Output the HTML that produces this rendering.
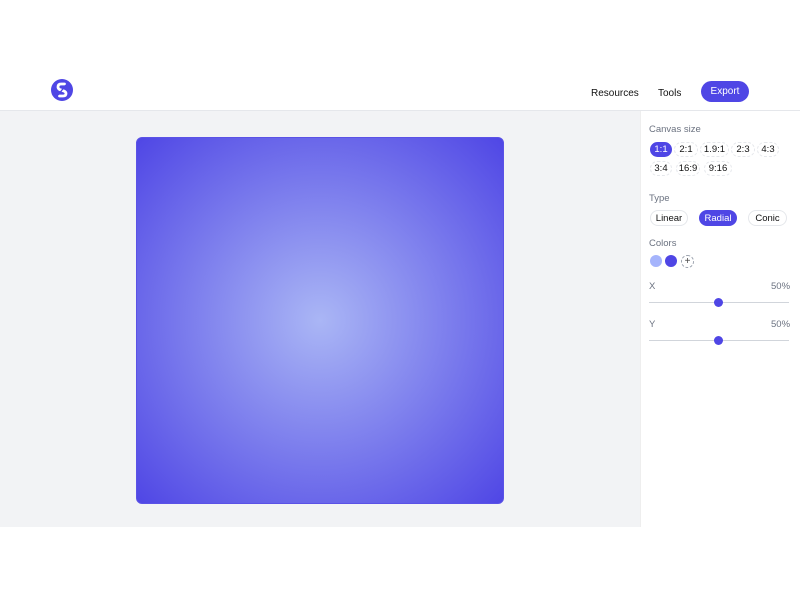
<!DOCTYPE html>
<html><head><style>
*{box-sizing:border-box;margin:0;padding:0}
body{width:800px;height:600px;background:#fff;font-family:"Liberation Sans",sans-serif;position:relative;overflow:hidden}
.hdr{position:absolute;top:0;left:0;width:800px;height:111px;border-bottom:1px solid #e5e7eb;background:#fff}
.logo{position:absolute;left:51px;top:79px;width:22px;height:22px;border-radius:50%;background:#4f46e5}
.nav{position:absolute;top:88px;font-size:10px;color:#111}
.exp{position:absolute;left:701px;top:81px;width:48px;height:21px;border-radius:11px;background:#4f46e5;color:#fff;font-size:10px;text-align:center;padding-top:6px;line-height:10px}
.main{position:absolute;top:111px;left:0;width:641px;height:416px;background:#f2f3f5}
.cv{position:absolute;left:136px;top:26px;width:368px;height:367px;border-radius:6px;border:1px solid #5b52e6;background:radial-gradient(circle farthest-corner at 50% 50%,#aab6f5 0%,#4f46e5 100%)}
.side{position:absolute;left:640px;top:111px;width:160px;height:416px;border-left:1px solid #eee;background:#fff}
.lbl{position:absolute;left:8px;font-size:9.5px;color:#6b7280}
.chip{position:absolute;height:15px;border-radius:8px;border:1px dashed #e5e7eb;font-size:9.5px;color:#111;text-align:center;line-height:14px}
.chip.on{background:#4f46e5;color:#fff;border:none;line-height:16px}
.pill{position:absolute;height:16px;border-radius:8px;border:1px solid #e5e7eb;font-size:9.5px;text-align:center;line-height:15px;color:#111}
.pill.on{background:#4f46e5;color:#fff;border:none;line-height:17px}
.track{position:absolute;left:8px;width:140px;height:1px;background:#d1d5db}
.knob{position:absolute;left:73px;width:9px;height:9px;border-radius:50%;background:#4f46e5}
</style></head><body>
<div class="hdr">
<div class="logo"><svg width="22" height="22" viewBox="0 0 22 22"><path d="M13.5 5 L10 5 Q7 5 7 8 Q7 9.5 8.5 10.5 L13 12 Q15 13 15 14.5 Q15 17 12 17 L8.5 17" fill="none" stroke="#fff" stroke-width="2.8" stroke-linecap="round"/><path d="M7 16 L15 6" stroke="#4f46e5" stroke-width="1.4"/></svg></div>
<div class="nav" style="left:591px">Resources</div>
<div class="nav" style="left:658px">Tools</div>
<div class="exp">Export</div>
</div>
<div class="main"><div class="cv"></div></div>
<div class="side">
<div class="lbl" style="top:13px">Canvas size</div>
<div class="chip on" style="left:9px;top:31px;width:22px">1:1</div>
<div class="chip" style="left:33px;top:31px;width:24px">2:1</div>
<div class="chip" style="left:59px;top:31px;width:29px">1.9:1</div>
<div class="chip" style="left:90px;top:31px;width:24px">2:3</div>
<div class="chip" style="left:116px;top:31px;width:22px">4:3</div>
<div class="chip" style="left:9px;top:50px;width:22px">3:4</div>
<div class="chip" style="left:35px;top:50px;width:24px">16:9</div>
<div class="chip" style="left:63px;top:50px;width:28px">9:16</div>
<div class="lbl" style="top:82px">Type</div>
<div class="pill" style="left:9px;top:99px;width:38px">Linear</div>
<div class="pill on" style="left:58px;top:99px;width:38px">Radial</div>
<div class="pill" style="left:107px;top:99px;width:39px">Conic</div>
<div class="lbl" style="top:127px">Colors</div>
<div style="position:absolute;left:9px;top:144px;width:12px;height:12px;border-radius:50%;background:#a5b4fc"></div>
<div style="position:absolute;left:24px;top:144px;width:12px;height:12px;border-radius:50%;background:#4f46e5"></div>
<div style="position:absolute;left:40px;top:144px;width:13px;height:13px;border-radius:50%;border:1px dashed #9ca3af;font-size:10px;line-height:11px;text-align:center;color:#444">+</div>
<div class="lbl" style="top:170px">X</div><div class="lbl" style="top:170px;left:130px">50%</div>
<div class="track" style="top:191px"></div><div class="knob" style="top:187px"></div>
<div class="lbl" style="top:208px">Y</div><div class="lbl" style="top:208px;left:130px">50%</div>
<div class="track" style="top:229px"></div><div class="knob" style="top:225px"></div>
</div>
</body></html>
